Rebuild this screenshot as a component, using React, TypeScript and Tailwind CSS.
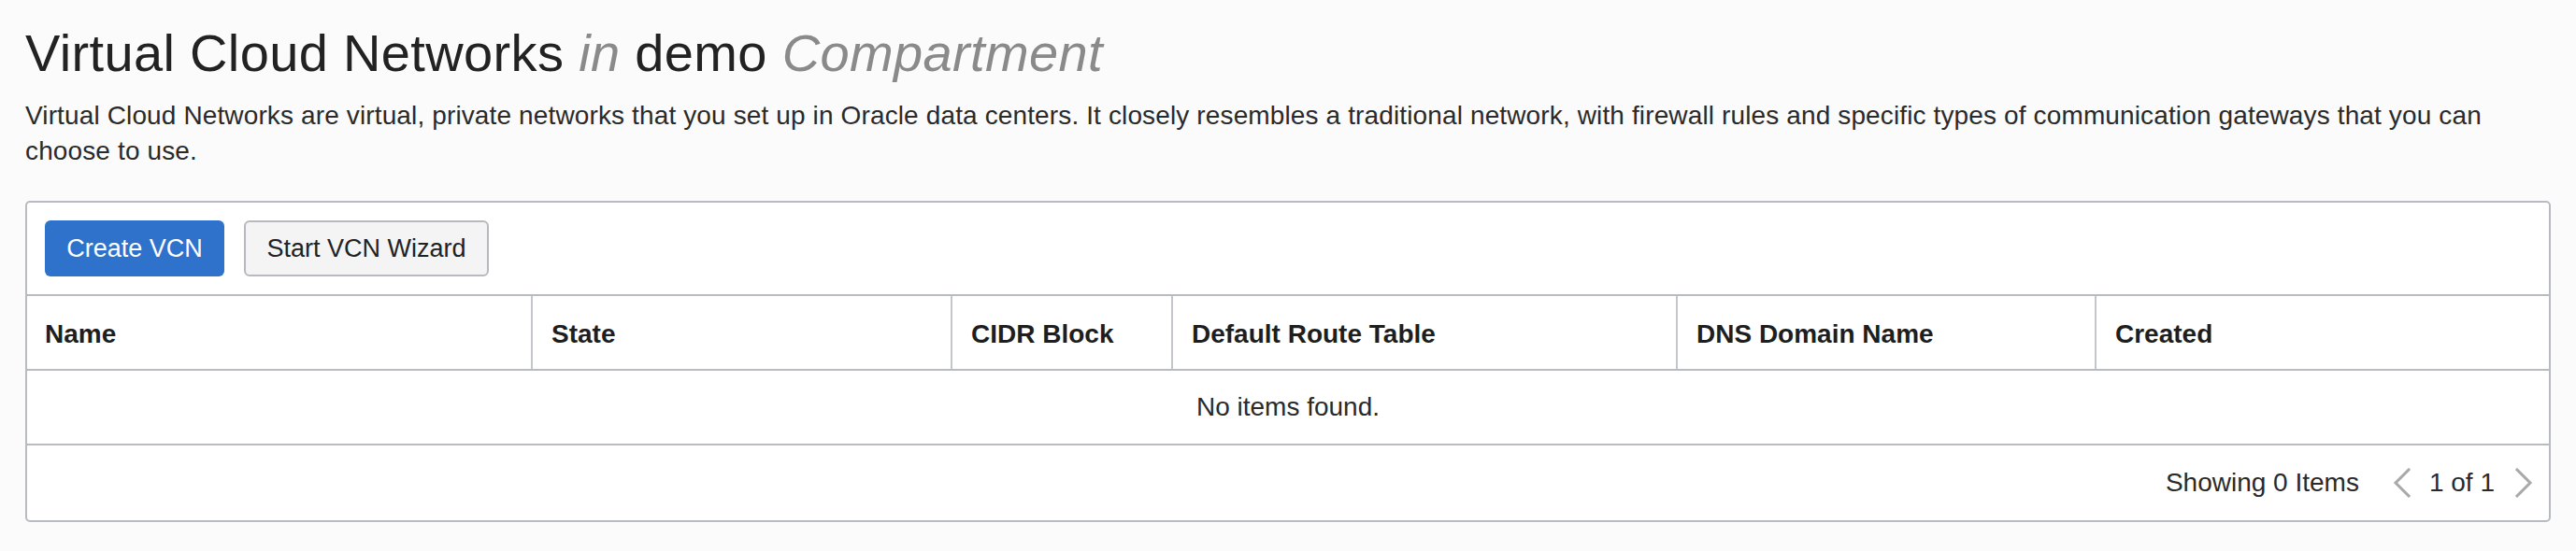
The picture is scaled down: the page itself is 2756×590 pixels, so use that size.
import React from "react";

const columns = ["Name", "State", "CIDR Block", "Default Route Table", "DNS Domain Name", "Created"];

function Chevron({ dir }: { dir: "left" | "right" }) {
  return (
    <svg width="22" height="32" viewBox="0 0 22 32" fill="none" stroke="#a9a9a9" strokeWidth="3" strokeLinecap="square">
      {dir === "left" ? <polyline points="18,2 4,16 18,30" /> : <polyline points="4,2 18,16 4,30" />}
    </svg>
  );
}

export default function App() {
  return (
    <div className="min-h-[590px] bg-[#fbfbfb] px-[27px] pt-[25px] pb-[31px] font-['Liberation_Sans',Arial,sans-serif] text-[#222]">
      {/* Titre */}
      <h1 className="text-[56px] leading-[64px] font-normal tracking-[0.35px]">
        Virtual Cloud Networks <span className="italic text-[#8a8a8a]">in</span> demo{" "}
        <span className="italic text-[#8a8a8a]">Compartment</span>
      </h1>
      <p className="mt-[16px] text-[28px] leading-[38px] tracking-[0.13px] text-[#2a2a2a]">
        Virtual Cloud Networks are virtual, private networks that you set up in Oracle data centers. It closely resembles a
        traditional network, with firewall rules and specific types of communication gateways that you can
        <br />
        choose to use.
      </p>

      {/* Tableau */}
      <div className="mt-[34px] rounded-[5px] border-2 border-[#b8bbc0] bg-white">
        <div className="flex gap-[21px] border-b-2 border-[#b8bbc0] p-[19px]">
          <button className="h-[60px] w-[192px] rounded-[6px] bg-[#2f72cb] text-[27px] text-white">Create VCN</button>
          <button className="h-[60px] w-[262px] rounded-[6px] border-2 border-[#b6b9be] bg-[#f4f4f4] text-[27px] text-[#222]">
            Start VCN Wizard
          </button>
        </div>
        <div className="grid grid-cols-[539px_449px_236px_540px_448px_1fr] border-b-2 border-[#b8bbc0]">
          {columns.map((c, i) => (
            <div
              key={c}
              className={`flex h-[78px] items-center pt-[3px] text-[28px] font-bold text-[#1e1e1e] ${
                i === 0 ? "pl-[19px]" : "border-l-2 border-[#c3c6ca] pl-[20px]"
              }`}
            >
              {c}
            </div>
          ))}
        </div>
        <div className="flex h-[80px] items-center justify-center border-b-2 border-[#b8bbc0] text-[28px] text-[#2a2a2a]">
          No items found.
        </div>
        <div className="flex h-[80px] items-center justify-end pr-[16px] text-[28px] text-[#2a2a2a]">
          <span>Showing 0 Items</span>
          <span className="ml-[35px] mr-[18px]">
            <Chevron dir="left" />
          </span>
          <span>1 of 1</span>
          <span className="ml-[20px]">
            <Chevron dir="right" />
          </span>
        </div>
      </div>
    </div>
  );
}
